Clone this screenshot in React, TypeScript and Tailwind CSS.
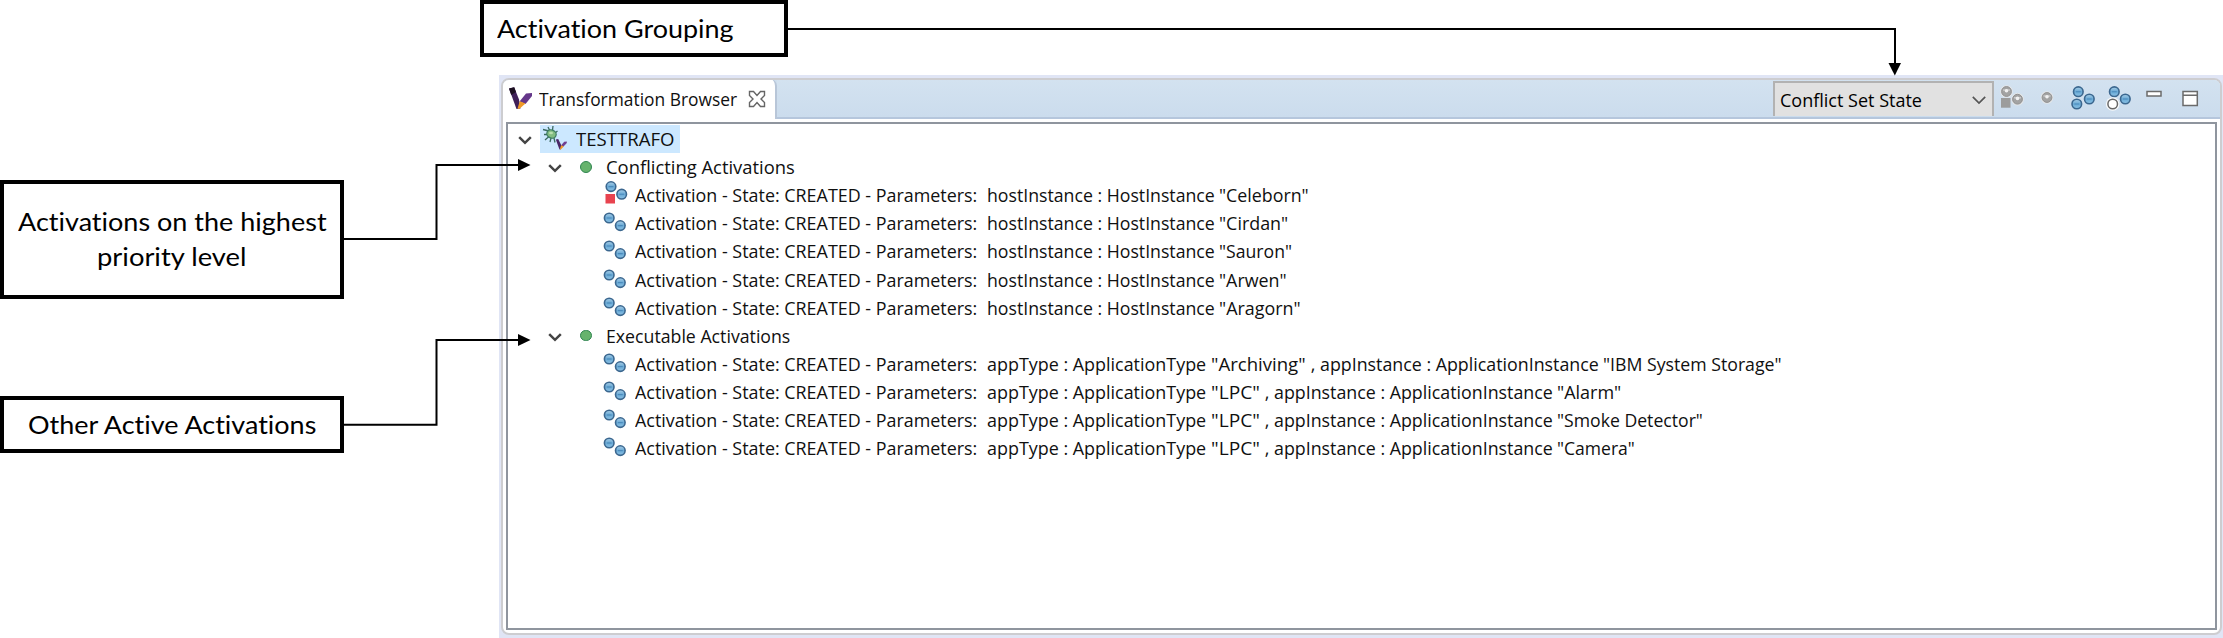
import { useLayoutEffect, useRef, useState, type ReactNode } from "react";

function Run({ w, children }: { w: number; children: string }) {
  const ref = useRef<HTMLSpanElement>(null);
  const [scale, setScale] = useState(1);
  useLayoutEffect(() => {
    if (ref.current) setScale(w / ref.current.offsetWidth);
  }, [w]);
  return (
    <span className="inline-block shrink-0 whitespace-pre" style={{ width: w }}>
      <span ref={ref} className="inline-block origin-left whitespace-pre" style={{ transform: `scaleX(${scale})` }}>
        {children}
      </span>
    </span>
  );
}

function Ball({ cx, cy }: { cx: number; cy: number }) {
  return (
    <g>
      <circle cx={cx} cy={cy} r="4.8" fill="url(#ball)" stroke="#3b678f" strokeWidth="1.6" />
      <path d={`M${cx - 2.4} ${cy}h4.8`} stroke="#4a8abb" strokeWidth="1.1" />
    </g>
  );
}

function GrayBall({ cx, cy }: { cx: number; cy: number }) {
  return (
    <g>
      <circle cx={cx} cy={cy} r="6.3" fill="#e4e6e8" />
      <circle cx={cx} cy={cy} r="4.9" fill="#a3a3a3" stroke="#919191" />
      <path d={`M${cx - 3.5} ${cy - 1.5}h7`} stroke="#c9c9c9" strokeWidth="1.4" />
      <circle cx={cx} cy={cy - 0.8} r="1.8" fill="#f1f1f1" />
    </g>
  );
}

function ActivationIcon({ selected }: { selected?: boolean }) {
  return (
    <svg className="h-7 w-7 shrink-0" viewBox="0 0 28 28">
      {selected ? (
        <>
          <rect x="2.5" y="13" width="9.5" height="9.5" fill="#e8434f" />
          <Ball cx={8} cy={5.6} />
          <Ball cx={18.7} cy={13.2} />
        </>
      ) : (
        <>
          <Ball cx={6.2} cy={9} />
          <Ball cx={17.3} cy={16.6} />
        </>
      )}
    </svg>
  );
}

function TreeChevron() {
  return (
    <svg className="h-7 w-4 shrink-0" viewBox="0 0 16 28">
      <path d="M2.2 12.2L8 17.8L13.8 12.2" fill="none" stroke="#444" strokeWidth="2.5" />
    </svg>
  );
}

function BrandMark() {
  return (
    <svg className="h-6 w-6 shrink-0" viewBox="0 0 24 24">
      <path d="M0 1.5L5.2 0.2L10 12.5L11.5 21.5L7.5 22Z" fill="#3f2058" />
      <path d="M0 1.5L5.2 0.2L7 5L2.2 8Z" fill="#1c1020" />
      <path d="M10.5 14.5L17 6.5L23 6V9L16.5 17Z" fill="#65378a" />
      <path d="M10.8 14.3L16.5 16.5L10.2 22L8.5 21.5Z" fill="#f09a28" />
    </svg>
  );
}

function RootIcon() {
  return (
    <svg className="h-7 w-7 shrink-0" viewBox="0 0 28 28">
      <g stroke="#3c6a62" strokeWidth="1.3" fill="none">
        <path d="M1 4.5L7 6M2 9.5H6M3 15L7 11.5M6 2L8 6M11 1L10.5 5M8 17L9 13M13 17.5L12 13M15.5 6L13 8" />
      </g>
      <ellipse cx="9.5" cy="9" rx="4.8" ry="4" fill="#83bd82" stroke="#3f7f63" strokeWidth="1.3" transform="rotate(25 9.5 9)" />
      <ellipse cx="9" cy="8" rx="2" ry="1.3" fill="#b9dfae" />
      <path d="M13.8 14.5L16.2 14L19.3 20.3L19 24.2L17.5 24.5Z" fill="#4b2767" />
      <path d="M19 20.5L22.2 16.8L24.8 16.5V18L21 22Z" fill="#704090" />
      <path d="M19.2 20.3L21.8 21.4L18.8 24.5L17.8 24.3Z" fill="#f09a28" />
    </svg>
  );
}

const hosts: [string, number][] = [
  ["Celeborn", 90],
  ["Cirdan", 69.5],
  ["Sauron", 72.5],
  ["Arwen", 67.5],
  ["Aragorn", 81.5],
];

const apps: [string, number, string, number][] = [
  ["Archiving", 95, "IBM System Storage", 179],
  ["LPC", 49, "Alarm", 64],
  ["LPC", 49, "Smoke Detector", 146],
  ["LPC", 49, "Camera", 78],
];

function Row({ className, children }: { className: string; children: ReactNode }) {
  return <li className={`flex h-[28.1px] items-center ${className}`}>{children}</li>;
}

function GroupRow({ label, w }: { label: string; w: number }) {
  return (
    <Row className="pl-[38.5px]">
      <TreeChevron />
      <span className="mr-[14px] ml-[17.5px] size-[11.5px] shrink-0 rounded-full border-[1.5px] border-[#2f8550] bg-[#66b36d]" />
      <Run w={w}>{label}</Run>
    </Row>
  );
}

function ActivationRow({ selected, children }: { selected?: boolean; children: ReactNode }) {
  return (
    <Row className="pl-[94.5px]">
      <ActivationIcon selected={selected} />
      <span className="flex pl-[4.5px]">
        <Run w={352}>{"Activation - State: CREATED - Parameters:  "}</Run>
        {children}
      </span>
    </Row>
  );
}

function Note({ className, children }: { className: string; children: ReactNode }) {
  return (
    <div className={`flex flex-col justify-center border-4 border-black bg-white font-['Lato',sans-serif] text-[25px] leading-[35px] text-black [font-variant-ligatures:none] ${className}`}>
      {children}
    </div>
  );
}

export default function App() {
  return (
    <div className="relative flex h-[638px] w-[2223px] flex-col overflow-hidden bg-white font-['Open_Sans',sans-serif] text-[18px] leading-7 text-[#101010]">
      <svg width="0" height="0" className="absolute">
        <defs>
          <linearGradient id="ball" x1="0" y1="0" x2="0" y2="1">
            <stop offset="0" stopColor="#a9cfe8" />
            <stop offset="0.5" stopColor="#68a8d4" />
            <stop offset="1" stopColor="#8cc3e6" />
          </linearGradient>
        </defs>
      </svg>

      <div className="h-[75px] shrink-0 pl-[480px]">
        <Note className="h-[57px] w-[308px] pl-[12.5px]">
          <Run w={237}>Activation Grouping</Run>
        </Note>
      </div>

      <div className="flex min-h-0 flex-1">
        <aside className="flex w-[499px] shrink-0 flex-col gap-[97px] pt-[105px]">
          <Note className="h-[119px] w-[344px] items-center pb-[2px]">
            <Run w={309}>Activations on the highest</Run>
            <Run w={150}>priority level</Run>
          </Note>
          <Note className="h-[57px] w-[344px] items-center">
            <Run w={288}>Other Active Activations</Run>
          </Note>
        </aside>

        <main className="min-w-0 flex-1 bg-[#e0e5f5] pt-[3px] pr-[1px] pb-[3px] pl-[2px]">
          <section className="flex h-full flex-col overflow-hidden rounded-[8px] border-2 border-[#cdcdd0] bg-white">
            <header className="flex h-[39px] shrink-0 bg-[#cfdfee]">
              <div className="-mt-px flex h-10 w-[274px] items-center rounded-tr-[7px] border-r-2 border-[#b8c6d8] bg-white pl-[6px]">
                <BrandMark />
                <span className="w-[6px]" />
                <Run w={198}>Transformation Browser</Run>
                <svg className="ml-[11px] size-[18px]" viewBox="0 0 18 18">
                  <path d="M1.5 1.5H5.5L9 5.5L12.5 1.5H16.5V5.5L13 9L16.5 12.5V16.5H12.5L9 12.5L5.5 16.5H1.5V12.5L5 9L1.5 5.5Z" fill="#fff" stroke="#666" strokeWidth="1.4" />
                </svg>
              </div>
              <div className="flex flex-1 justify-end border-b-2 border-[#b5c6dc] bg-linear-to-b from-[#d3e2f0] to-[#cbdced]">
                <div className="mt-px mr-[6px] flex h-[35px] w-[221px] items-center justify-between border-x-2 border-t-2 border-[#b2b2b2] bg-[#e1e1e1] pr-[5px] pl-[5px] text-black">
                  <Run w={142}>Conflict Set State</Run>
                  <svg className="size-4" viewBox="0 0 16 16">
                    <path d="M1.8 4.8L8 11L14.2 4.8" fill="none" stroke="#555" strokeWidth="1.7" />
                  </svg>
                </div>
                <svg className="h-[37px] w-[220px]" viewBox="2000 80 220 37">
                  <GrayBall cx={2006.5} cy={91.5} />
                  <GrayBall cx={2017.5} cy={99.2} />
                  <rect x="2001" y="98" width="9.5" height="9.7" fill="#9c9c9c" />
                  <GrayBall cx={2047} cy={97.5} />
                  <Ball cx={2078.3} cy={91.7} />
                  <Ball cx={2089.3} cy={99} />
                  <Ball cx={2076.8} cy={104} />
                  <Ball cx={2114.3} cy={91.7} />
                  <Ball cx={2125.3} cy={99} />
                  <circle cx="2112.7" cy="104" r="6.8" fill="#f7f9fb" />
                  <circle cx="2112.7" cy="104" r="4.8" fill="#fff" stroke="#686868" strokeWidth="1.5" />
                  <rect x="2147" y="91.5" width="14" height="4.5" fill="#fff" stroke="#6b6b6b" strokeWidth="1.5" />
                  <rect x="2183" y="91.5" width="14.3" height="14" fill="#fff" stroke="#6b6b6b" strokeWidth="1.5" />
                  <path d="M2183 95.3h14.3" stroke="#6b6b6b" strokeWidth="1.4" />
                </svg>
              </div>
            </header>

            <ul className="mx-[3px] mt-[3px] mb-[3px] min-h-0 flex-1 border-2 border-[#8f959e] pt-px">
              <Row className="pl-[8.5px]">
                <TreeChevron />
                <span className="ml-[7.5px] flex h-7 w-[140px] items-center bg-[#cce8ff] pl-[2px]">
                  <RootIcon />
                  <span className="w-[6px]" />
                  <Run w={98}>TESTTRAFO</Run>
                </span>
              </Row>
              <GroupRow label="Conflicting Activations" w={189} />
              {hosts.map(([name, w], i) => (
                <ActivationRow key={name} selected={i === 0}>
                  <Run w={232}>{"hostInstance : HostInstance "}</Run>
                  <Run w={w}>{`"${name}"`}</Run>
                </ActivationRow>
              ))}
              <GroupRow label="Executable Activations" w={184} />
              {apps.map(([type, tw, name, nw]) => (
                <ActivationRow key={name}>
                  <Run w={224}>{"appType : ApplicationType "}</Run>
                  <Run w={tw}>{`"${type}"`}</Run>
                  <Run w={14}>{" , "}</Run>
                  <Run w={283}>{"appInstance : ApplicationInstance "}</Run>
                  <Run w={nw}>{`"${name}"`}</Run>
                </ActivationRow>
              ))}
            </ul>
          </section>
        </main>
      </div>

      <svg className="pointer-events-none absolute inset-0" width="2223" height="638" viewBox="0 0 2223 638">
        <g fill="none" stroke="#000" strokeWidth="2">
          <path d="M788 29H1895V64" />
          <path d="M344 239H436.5V165H519" />
          <path d="M344 424.7H436.5V340H519" />
        </g>
        <path d="M1888.5 63H1901L1894.8 75.5Z" />
        <path d="M518 159V171L530.5 165Z" />
        <path d="M518 334V346L530.5 340Z" />
      </svg>
    </div>
  );
}
